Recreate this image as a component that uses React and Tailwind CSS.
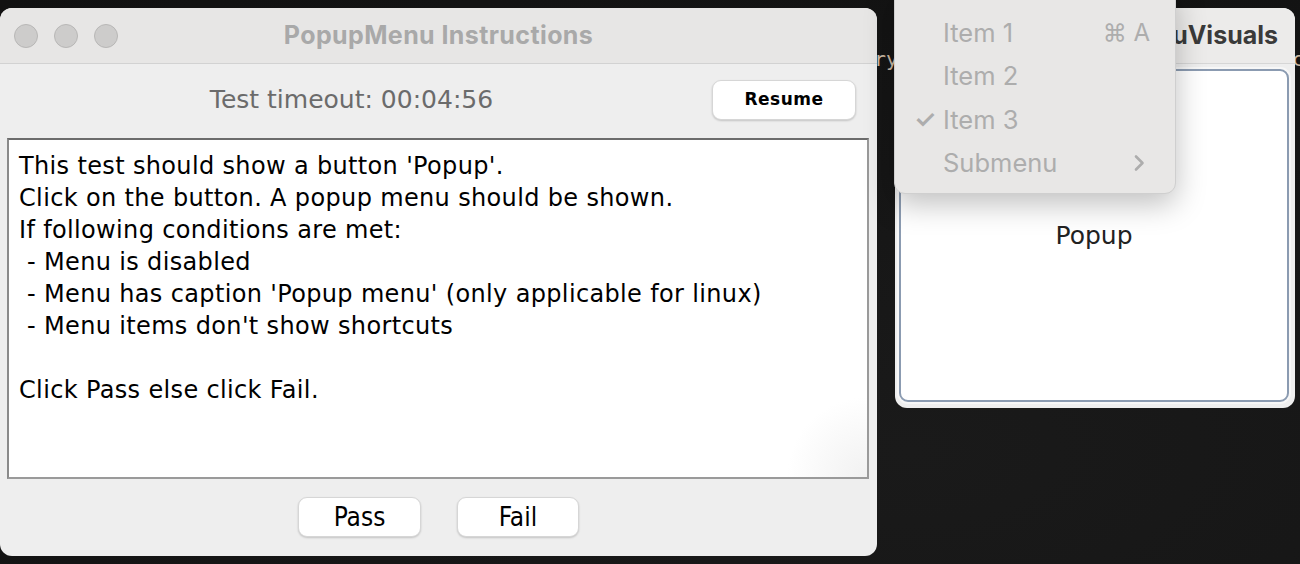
const lucida = { fontFamily: '"DejaVu Sans", "Open Sans", sans-serif' };
const narrow = { fontFamily: '"Liberation Sans Narrow", "DejaVu Sans Condensed", sans-serif' };
const sf = { fontFamily: '"Inter", "Liberation Sans", sans-serif' };

const menuItems = [
  { label: "Item 1", shortcut: "⌘ A" },
  { label: "Item 2" },
  { label: "Item 3", checked: true },
  { label: "Submenu", submenu: true },
];

function TrafficLights() {
  return (
    <div className="flex items-center gap-4 pl-[14px]">
      {[0, 1, 2].map((i) => (
        <span key={i} className="w-6 h-6 rounded-full bg-[#cdcccb] border border-[#b8b7b6]" />
      ))}
    </div>
  );
}

function MacButton({ children, className }) {
  return (
    <button
      className={
        "bg-white rounded-[9px] border border-[#d6d6d6] shadow-[0_1px_2px_rgba(0,0,0,0.18)] flex items-center justify-center text-black " +
        className
      }
    >
      {children}
    </button>
  );
}

function InstructionsWindow() {
  const lines = [
    "This test should show a button 'Popup'.",
    "Click on the button. A popup menu should be shown.",
    "If following conditions are met:",
    " - Menu is disabled",
    " - Menu has caption 'Popup menu' (only applicable for linux)",
    " - Menu items don't show shortcuts",
    "",
    "Click Pass else click Fail.",
  ];

  return (
    <div className="absolute left-0 top-[8px] w-[877px] h-[548px] rounded-[12px] bg-[#eeeeee] overflow-hidden flex flex-col">
      <div className="h-[56px] shrink-0 bg-[#e7e6e5] border-b border-[#d2d2d2] grid grid-cols-[1fr_auto_1fr] items-center">
        <TrafficLights />
        <div className="text-[25px] font-bold text-[#a9a9a9] tracking-[0.4px]" style={sf}>
          PopupMenu Instructions
        </div>
        <div />
      </div>

      <div className="flex items-center h-[74px] pr-[21px] pb-[2px]">
        <div className="flex-1 text-center text-[25px] text-[#6b6b6b] pr-[9px]" style={lucida}>
          Test timeout: 00:04:56
        </div>
        <MacButton className="w-[144px] h-[40px] text-[17px] font-bold tracking-[0.5px]">
          <span style={lucida}>Resume</span>
        </MacButton>
      </div>

      <div className="ml-[7px] mr-[8px] h-[341px] shrink-0 border-2 border-[#9a9a9a] border-t-[#6c6c6c] border-l-[#8a8a8a] px-[10px] pt-[10px] bg-[radial-gradient(circle_at_100%_100%,#f1f1f1_0,#ffffff_80px)]">
        {lines.map((line, i) => (
          <div key={i} className="h-[32px] text-[24px] tracking-[0.35px] text-black whitespace-pre leading-[32px]" style={lucida}>
            {line}
          </div>
        ))}
      </div>

      <div className="flex-1 flex items-center justify-center gap-[36px] pb-[1px]">
        <MacButton className="w-[123px] h-[40px] text-[26px]">
          <span style={narrow}>Pass</span>
        </MacButton>
        <MacButton className="w-[122px] h-[40px] text-[26px]">
          <span style={narrow}>Fail</span>
        </MacButton>
      </div>
    </div>
  );
}

function VisualsWindow() {
  return (
    <div className="absolute left-[895px] top-[8px] w-[400px] h-[400px] rounded-[12px] bg-[#eeeeee] overflow-hidden flex flex-col">
      <div className="h-[56px] shrink-0 bg-[#ecebea] border-b border-[#d6d6d6] flex items-center justify-between pr-[17px]">
        <TrafficLights />
        <div className="text-[25px] font-bold text-[#3a3a3a]" style={sf}>
          PopupMenuVisuals
        </div>
      </div>
      <div className="flex-1 pl-[4px] pr-[6px] pt-[5px] pb-[6px]">
        <div className="h-full rounded-[9px] bg-white border-2 border-[#8b9bb1] shadow-[0_0_0_2px_#f7f7f7] flex items-center justify-center">
          <span className="text-[25px] text-[#222]" style={lucida}>Popup</span>
        </div>
      </div>
    </div>
  );
}

function PopupMenu() {
  return (
    <div className="absolute left-[894px] top-[-12px] w-[282px] h-[206px] rounded-[11px] bg-[#e8e7e6] border border-[#cfcfcf] shadow-[0_10px_30px_rgba(0,0,0,0.25)] pt-[22px]" style={sf}>
      {menuItems.map((item) => (
        <div key={item.label} className="h-[43.5px] flex items-center pl-[19px] pr-[25px] text-[25.5px] text-[#adadad]">
          <span className="w-[29px] text-[25px] font-semibold">{item.checked ? "✓" : ""}</span>
          <span className="flex-1">{item.label}</span>
          {item.shortcut && <span className="text-[24px]">{item.shortcut}</span>}
          {item.submenu && (
            <svg width="14" height="20" viewBox="0 0 14 20" className="mr-[4px]">
              <path d="M4 3.5 L10.5 10 L4 16.5" fill="none" stroke="#adadad" strokeWidth="2.6" strokeLinecap="round" strokeLinejoin="round" />
            </svg>
          )}
        </div>
      ))}
    </div>
  );
}

export default function App() {
  return (
    <div className="relative w-[1300px] h-[564px] overflow-hidden bg-[radial-gradient(ellipse_at_70%_80%,#1a1a1a,#111111)]">
      <div className="absolute left-[850px] top-[44px] text-[20px] text-[#cdbba6]" style={{ fontFamily: '"DejaVu Sans Mono", monospace' }}>
        tory
      </div>
      <div className="absolute left-[1292px] top-[44px] text-[20px] text-[#cdbba6]" style={{ fontFamily: '"DejaVu Sans Mono", monospace' }}>
        c
      </div>
      <InstructionsWindow />
      <VisualsWindow />
      <PopupMenu />
    </div>
  );
}
